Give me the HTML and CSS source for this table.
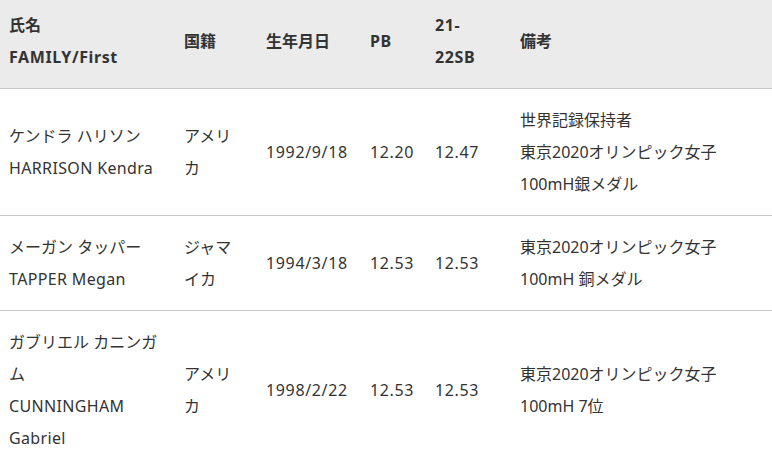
FILE: index.html
```html
<!DOCTYPE html>
<html lang="ja">
<head>
<meta charset="utf-8">
<title>選手一覧</title>
<link rel="stylesheet" href="styles.css">
</head>
<body>
<table class="athletes">
  <colgroup>
    <col class="c-name">
    <col class="c-nat">
    <col class="c-dob">
    <col class="c-pb">
    <col class="c-sb">
    <col class="c-note">
  </colgroup>
  <thead>
    <tr>
      <th>氏名<br><span class="en">FAMILY/First</span></th>
      <th>国籍</th>
      <th>生年月日</th>
      <th><span class="en">PB</span></th>
      <th><span class="en">21-22SB</span></th>
      <th>備考</th>
    </tr>
  </thead>
  <tbody>
    <tr>
      <td>ケンドラ ハリソン<br><span class="en">HARRISON Kendra</span></td>
      <td>アメリカ</td>
      <td class="num">1992/9/18</td>
      <td class="num">12.20</td>
      <td class="num">12.47</td>
      <td>世界記録保持者<br>東京2020オリンピック女子<br>100mH銀メダル</td>
    </tr>
    <tr>
      <td>メーガン タッパー<br><span class="en">TAPPER Megan</span></td>
      <td>ジャマイカ</td>
      <td class="num">1994/3/18</td>
      <td class="num">12.53</td>
      <td class="num">12.53</td>
      <td>東京2020オリンピック女子<br>100mH 銅メダル</td>
    </tr>
    <tr>
      <td>ガブリエル カニンガム<br><span class="en">CUNNINGHAM Gabriel</span></td>
      <td>アメリカ</td>
      <td class="num">1998/2/22</td>
      <td class="num">12.53</td>
      <td class="num">12.53</td>
      <td>東京2020オリンピック女子<br>100mH 7位</td>
    </tr>
  </tbody>
</table>
</body>
</html>
```
FILE: styles.css
```css
html, body {
  margin: 0;
  padding: 0;
  background: #fff;
}
body {
  font-family: "Noto Sans", "Noto Sans CJK JP", sans-serif;
  font-size: 16px;
  line-height: 32px;
  color: #333;
}
.athletes {
  width: 772px;
  border-collapse: collapse;
  table-layout: fixed;
}
.c-name { width: 175px; }
.c-nat { width: 82px; }
.c-dob { width: 104px; }
.c-pb { width: 65px; }
.c-sb { width: 85px; }
.c-note { width: 261px; }
.athletes th,
.athletes td {
  text-align: left;
  vertical-align: middle;
  padding: 15px 10px 15px 9px;
  border-bottom: 1px solid #c8c8c8;
}
.athletes th {
  background: #ebebeb;
  font-weight: bold;
  padding-top: 9px;
  padding-bottom: 15px;
}
.athletes thead th:nth-child(5) {
  padding-right: 20px;
}
.en {
  letter-spacing: 0.35px;
}
.athletes th .en {
  letter-spacing: 0.6px;
}
.athletes td.num {
  letter-spacing: 0.65px;
}
```
